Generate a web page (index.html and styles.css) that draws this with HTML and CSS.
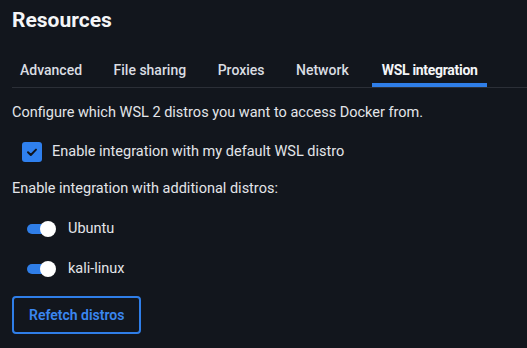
FILE: index.html
```html
<!DOCTYPE html>
<html lang="en">
  <head>
    <meta charset="UTF-8" />
    <meta name="viewport" content="width=device-width, initial-scale=1.0" />
    <title>Resources</title>
    <link rel="stylesheet" href="styles.css">
  </head>
  <body>
    <h1 class="title">Resources</h1>

    <nav class="tabs">
      <a href="javascript:;" class="tab">Advanced</a>
      <a href="javascript:;" class="tab">File sharing</a>
      <a href="javascript:;" class="tab">Proxies</a>
      <a href="javascript:;" class="tab">Network</a>
      <a href="javascript:;" class="tab on">WSL integration</a>
    </nav>

    <section class="panel">
      <p class="desc">Configure which WSL 2 distros you want to access Docker from.</p>

      <label class="check-row">
        <span class="checkbox">
          <svg width="20" height="20" viewBox="0 0 20 20">
            <path d="M6 10.2 L8.8 13 L14 7.6" fill="none" stroke="#10141c" stroke-width="2" stroke-linecap="round" stroke-linejoin="round" />
          </svg>
        </span>
        Enable integration with my default WSL distro
      </label>

      <p class="desc extra">Enable integration with additional distros:</p>

      <ul class="distros">
        <li><span class="switch"></span>Ubuntu</li>
        <li><span class="switch"></span>kali-linux</li>
      </ul>

      <button class="btn-outline">Refetch distros</button>
    </section>
  </body>
</html>
```

FILE: styles.css
```css
* {
  margin: 0;
  padding: 0;
  box-sizing: border-box;
  text-decoration: none;
}
body {
  background: #12161d;
  color: #e3e5e9;
  font-family: Roboto, "Liberation Sans", sans-serif;
  font-size: 14.5px;
  line-height: 20px;
  padding: 0 0 0 12px;
}
.title {
  margin-top: 6px;
  font-size: 21px;
  line-height: 28px;
  font-weight: 700;
  color: #f4f5f7;
}
.tabs {
  display: flex;
  gap: 15.5px;
  margin-top: 26px;
  border-bottom: 1px solid #2b2f37;
  font-size: 14px;
}
.tab {
  padding: 0 8px 3px;
  border-bottom: 4px solid transparent;
  color: #dadde2;
  font-weight: 500;
}
.tab.on {
  padding: 0 9.5px 3px;
  color: #f4f5f7;
  font-weight: 700;
  letter-spacing: -0.3px;
  border-bottom-color: #2f7ee8;
}
.panel {
  padding-top: 15px;
}
.check-row {
  display: flex;
  align-items: center;
  gap: 10px;
  margin: 19px 0 0 10px;
}
.checkbox {
  display: flex;
  width: 20px;
  height: 20px;
  border-radius: 3px;
  background: #2f80ee;
}
.desc.extra {
  margin-top: 17px;
}
.distros {
  list-style: none;
  display: flex;
  flex-direction: column;
  gap: 24px;
  margin: 22px 0 0 15px;
}
.distros li {
  display: flex;
  align-items: center;
  gap: 12px;
  height: 16px;
}
.switch {
  position: relative;
  width: 29px;
  height: 16px;
}
.switch::before {
  content: "";
  position: absolute;
  left: 0;
  top: 3px;
  width: 24px;
  height: 10px;
  border-radius: 5px;
  background: #2f7ee8;
}
.switch::after {
  content: "";
  position: absolute;
  right: 0;
  top: 0;
  width: 16px;
  height: 16px;
  border-radius: 50%;
  background: #fff;
}
.btn-outline {
  margin-top: 19px;
  padding: 7px 15px;
  border: 2px solid #2f7ee8;
  border-radius: 4px;
  background: transparent;
  color: #3a86f0;
  font-family: inherit;
  font-size: 14px;
  line-height: 20px;
  font-weight: 600;
}
```
